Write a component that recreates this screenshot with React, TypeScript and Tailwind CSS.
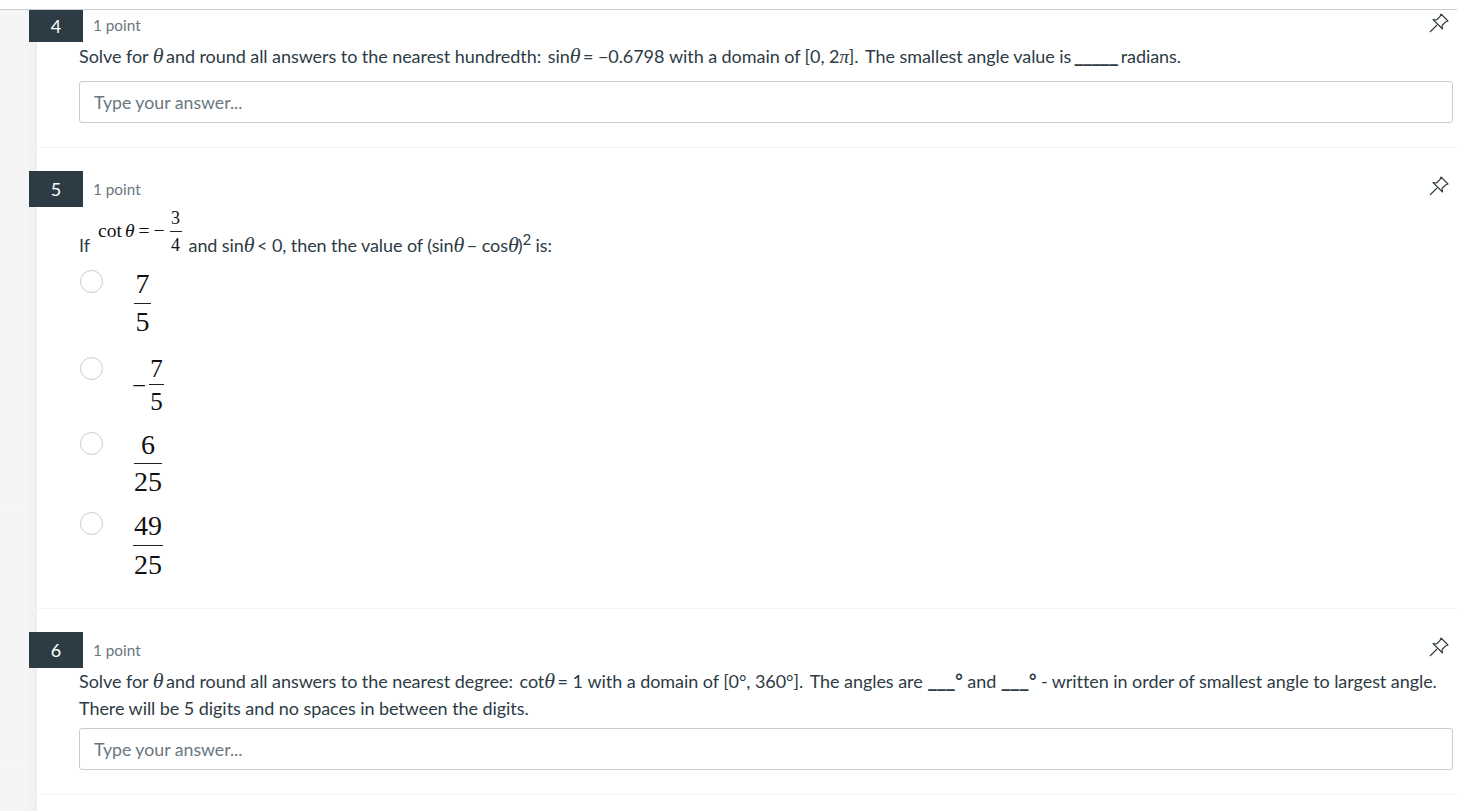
import React from "react";

const serif = "font-['Liberation_Serif',serif]";

function Theta() {
  return <span className={`${serif} -mr-[2px] text-[22px] italic leading-none text-[#2d3b45]`}>θ</span>;
}

function Blank({ n, tight }: { n: string; tight?: boolean }) {
  return (
    <span className={`text-[22px] font-bold leading-none ${tight ? "-ml-[2px] mr-[-1px] tracking-[-1.6px]" : "tracking-[-1.2px]"}`}>{n}</span>
  );
}

function Gap() {
  return <span className="inline-block w-[2px]" />;
}

function PinIcon({ className }: { className: string }) {
  return (
    <svg viewBox="0 0 20 20" width="20" height="20" fill="none" stroke="#2d3b45" strokeWidth="1.1" strokeLinejoin="round" className={className}>
      <path d="M12 1 L19 8 L16.5 9 L13 12.5 L13.5 16 L4 6.5 L7.5 7 L11 3.5 Z" />
      <path d="M1 19 L8 12" />
    </svg>
  );
}

function Header({ n, h, first }: { n: number; h: string; first?: boolean }) {
  return (
    <div className="flex items-start">
      <div className={`-ml-2 flex w-[54px] ${h} shrink-0 items-center justify-center bg-[#2d3b45] text-[18px] text-white`}>
        {n}
      </div>
      <div className={`ml-[10px] ${first ? "mt-[4px]" : "mt-[7px]"} flex-1 text-[15.3px] leading-[22px] text-[#6b7780]`}>1 point</div>
      <PinIcon className={`mr-[8px] ${first ? "mt-[3px]" : "mt-[5px]"}`} />
    </div>
  );
}

function AnswerInput() {
  return (
    <div className="mr-[4px] flex h-[42px] items-center rounded-[3px] border border-[#c7cdd1] bg-white pl-[14px] pt-[2px] text-[17.7px] text-[#6b7780]">
      Type your answer...
    </div>
  );
}

function Frac({ top, bottom, size, bar, gap, width }: { top: string; bottom: string; size: string; bar: string; gap: string; width: string }) {
  return (
    <span className={`${serif} ${size} ${width} ${gap} inline-flex flex-col items-center leading-none text-[#111]`}>
      <span>{top}</span>
      <span className={`${bar} w-full bg-[#222]`} />
      <span>{bottom}</span>
    </span>
  );
}

function Choice({ rowH, children }: { rowH: string; children: React.ReactNode }) {
  return (
    <div className={`flex items-start ${rowH}`}>
      <span className="ml-[1px] h-[23px] w-[23px] shrink-0 rounded-full border border-[#c7cdd1] bg-white" />
      <div className="flex flex-1 items-start">{children}</div>
    </div>
  );
}

export default function App() {
  return (
    <div className="h-[811px] w-[1457px] overflow-hidden bg-white font-['Lato',sans-serif] text-[18px] text-[#2d3b45]">
      <div className="h-[10px] border-b border-[#c7cdd1]" />
      <div className="flex h-[801px]">
        <div className="w-[37px] shrink-0 bg-gradient-to-r from-[#f5f5f5] from-[75%] to-[#eeeeee]" />
        <main className="min-w-0 flex-1">
          <section className="h-[138px] border-b border-[#f3f4f4]">
            <Header n={4} h="h-[32px]" first />
            <div className="ml-[42px]">
              <p className="h-[29px] tracking-[-0.06px] leading-[29px]">
                Solve for <Theta /> and round all answers to the nearest hundredth: <Gap />sin<Theta /> = −0.6798 with a domain of [0, 2<span className={`${serif} text-[19px] italic leading-none`}>π</span>]. <Gap />The smallest angle value is <Blank n="_____" tight /> radians.
              </p>
              <div className="mt-[10px]">
                <AnswerInput />
              </div>
            </div>
          </section>

          <section className="h-[461px] border-b border-[#f3f4f4] pt-[23px]">
            <Header n={5} h="h-[36px]" />
            <div className="ml-[42px]">
              <div className="flex h-[50px] items-end whitespace-pre">
                <span className="leading-[24px]">If</span>
                <span className={`${serif} mb-[3px] ml-[8px] flex items-center text-[19.5px] text-[#111]`}>
                  <span className="mb-[2px] flex">
                    <span>cot</span>
                    <i className="ml-[3px]">θ</i>
                    <span className="ml-[4px]">=</span>
                    <span className="ml-[4px]">−</span>
                  </span>
                  <Frac top="3" bottom="4" size="text-[18px]" bar="h-[1px] my-[4px]" gap="" width="w-[12px] ml-[5px]" />
                </span>
                <span className="ml-[7px] leading-[24px] tracking-[-0.08px]">
                  and sin<Theta /> &lt; 0, then the value of (sin<Theta /> − cos<Theta /><span className="ml-[1px]">)</span><sup className="text-[15px]">2</sup> is:
                </span>
              </div>
              <div className="mt-[13px]">
                <Choice rowH="h-[87px]">
                  <span className="ml-[31px]">
                    <Frac top="7" bottom="5" size="text-[28px]" bar="h-[1px] mt-[5px] mb-[4px]" gap="" width="w-[17px]" />
                  </span>
                </Choice>
                <Choice rowH="h-[75px]">
                  <span className="ml-[29px] flex items-center">
                    <span className={`${serif} mr-[3px] text-[25px] leading-none text-[#111]`}>−</span>
                    <Frac top="7" bottom="5" size="text-[25px]" bar="h-[1px] mt-[3px] mb-[4px]" gap="-mt-[1px]" width="w-[15px]" />
                  </span>
                </Choice>
                <Choice rowH="h-[80px]">
                  <span className="ml-[31px]">
                    <Frac top="6" bottom="25" size="text-[28px]" bar="h-[1px] my-[4px]" gap="-mt-[1px]" width="w-[28px]" />
                  </span>
                </Choice>
                <Choice rowH="h-[78px]">
                  <span className="ml-[30px]">
                    <Frac top="49" bottom="25" size="text-[28px]" bar="h-[1px] my-[5px]" gap="" width="w-[30px]" />
                  </span>
                </Choice>
              </div>
            </div>
          </section>

          <section className="h-[186px] border-b border-[#f3f4f4] pt-[23px]">
            <Header n={6} h="h-[36px]" />
            <div className="ml-[42px]">
              <p className="h-[27px] leading-[27px] tracking-[-0.06px] whitespace-nowrap">
                Solve for <Theta /> and round all answers to the nearest degree: <Gap />cot<Theta /> = 1 with a domain of [0°, 360°]. <Gap />The angles are <Blank n="___" /><b className="ml-[1px]">°</b> and <Blank n="___" /><b className="ml-[1px]">°</b> - written in order of smallest angle to largest angle.
              </p>
              <p className="leading-[27px] tracking-[-0.06px]">There will be 5 digits and no spaces in between the digits.</p>
              <div className="mt-[6px]">
                <AnswerInput />
              </div>
            </div>
          </section>
        </main>
      </div>
    </div>
  );
}
